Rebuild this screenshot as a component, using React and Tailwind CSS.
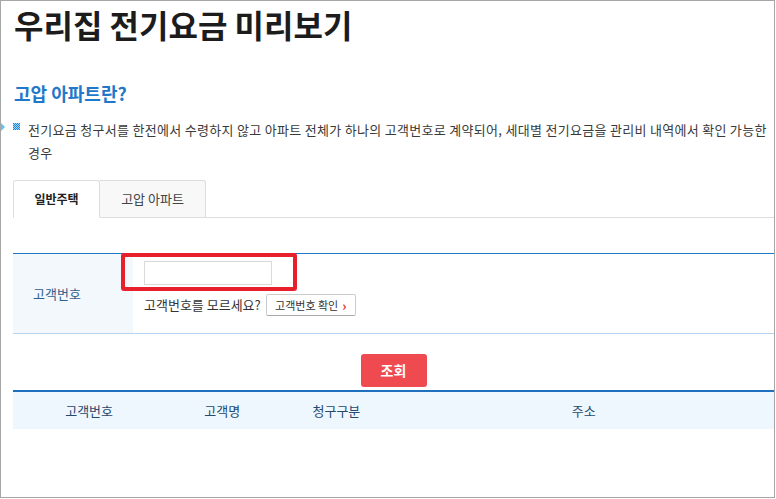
import React from 'react';

const font = { fontFamily: '"Noto Sans CJK KR", "Noto Sans", sans-serif' };

const Checker = () => (
  <svg width="7" height="7" viewBox="0 0 7 7" className="shrink-0">
    <defs>
      <pattern id="chk" width="2" height="2" patternUnits="userSpaceOnUse">
        <rect width="1" height="1" fill="#1e88e5" />
        <rect x="1" y="1" width="1" height="1" fill="#1e88e5" />
        <rect x="1" width="1" height="1" fill="#9fd0f5" />
        <rect y="1" width="1" height="1" fill="#9fd0f5" />
      </pattern>
    </defs>
    <rect width="7" height="7" fill="url(#chk)" />
  </svg>
);

const columns = [
  { name: '고객번호', w: 'w-[20%]' },
  { name: '고객명', w: 'w-[15%]' },
  { name: '청구구분', w: 'w-[15%]' },
  { name: '주소', w: 'w-[50%]' },
];

export default function App() {
  return (
    <div
      className="w-[775px] h-[498px] border border-[#a6a6a6] bg-white pl-3 overflow-hidden text-[#333]"
      style={font}
    >
      {/* Title */}
      <h1 className="pl-px pt-px text-[32px] font-bold leading-[44px] text-[#1c1c1c]">
        우리집 전기요금 미리보기
      </h1>

      <h2 className="mt-[35px] pl-px text-[18px] font-bold leading-[24px] text-[#1f78c9]">
        고압 아파트란?
      </h2>

      {/* Description */}
      <div className="-ml-3 mt-[13px] flex">
        <svg width="4" height="8" viewBox="0 0 4 8" className="mt-[5px] shrink-0">
          <path d="M0 0 L4 4 L0 8 Z" fill="#5fc4e8" />
        </svg>
        <div className="ml-[8px] mt-[5px]">
          <Checker />
        </div>
        <p className="ml-[8px] pr-1 text-[13px] leading-[23px] tracking-[0.3px] text-[#3a3a3a]">
          전기요금 청구서를 한전에서 수령하지 않고 아파트 전체가 하나의 고객번호로 계약되어, 세대별 전기요금을 관리비 내역에서 확인 가능한 경우
        </p>
      </div>

      {/* Tabs */}
      <div className="mt-[16px] flex items-end border-b border-[#dddddd]">
        <div className="-mb-px flex h-[38px] w-[87px] items-center justify-center rounded-t-[3px] border border-[#dddddd] border-b-white bg-white text-[12px] font-bold text-[#222]">
          일반주택
        </div>
        <div className="flex h-[37px] w-[106px] items-center justify-center rounded-tr-[3px] border border-l-0 border-b-0 border-[#dddddd] bg-[#f8f8f8] text-[13px] text-[#444]">
          고압 아파트
        </div>
      </div>

      {/* Form */}
      <div className="relative mt-[35px] flex border-t border-b border-t-[#2078c8] border-b-[#b6d4ef]">
        <div className="flex h-[79px] w-[120px] items-center pl-5 bg-[#f3f8fd] text-[13px] text-[#2f5f8e]">
          고객번호
        </div>
        <div className="flex flex-col pl-[11px] pt-[7px]">
          <input className="h-[24px] w-[128px] border border-[#d9d9d9] bg-white outline-none" />
          <div className="mt-[9px] flex items-center">
            <span className="text-[13px] text-[#333]">고객번호를 모르세요?</span>
            <button className="ml-[5px] flex h-[22px] w-[90px] items-center justify-center gap-[4px] rounded-[2px] border border-[#cccccc] border-b-[#aaaaaa] bg-white text-[11px] text-[#333]">
              고객번호 확인
              <span className="text-[13px] font-bold leading-none text-[#e5242c]">›</span>
            </button>
          </div>
        </div>
        {/* highlight annotation */}
        <div className="pointer-events-none absolute left-[108px] top-[-1px] h-[38px] w-[176px] rounded-[3px] border-4 border-[#e8202b]" />
      </div>

      <div className="mt-[20px] flex justify-center">
        <button className="h-[33px] w-[66px] rounded-[3px] bg-[#f04a51] text-[14px] font-bold text-white">
          조회
        </button>
      </div>

      {/* Result header */}
      <div className="mt-[3px] flex h-[39px] items-center border-t-2 border-[#1f6fbf] bg-[#eef6fe] text-[13px] text-[#25496f]">
        {columns.map((c) => (
          <div key={c.name} className={`${c.w} text-center`}>
            {c.name}
          </div>
        ))}
      </div>
    </div>
  );
}
